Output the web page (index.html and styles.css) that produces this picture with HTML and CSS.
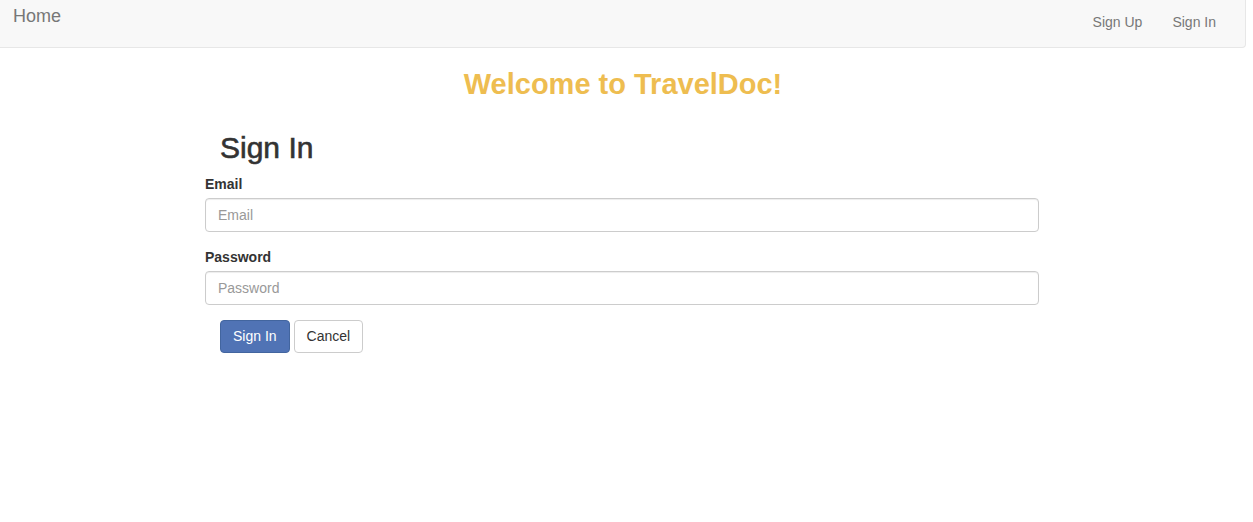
FILE: index.html
```html
<!DOCTYPE html>
<html>
<head>
<meta charset="utf-8">
<link rel="stylesheet" href="styles.css">
</head>
<body>
<nav class="navbar">
  <a class="brand" href="#">Home</a>
  <ul class="nav-links">
    <li><a href="#">Sign Up</a></li>
    <li><a href="#">Sign In</a></li>
  </ul>
</nav>
<main class="main">
  <h1 class="welcome">Welcome to TravelDoc!</h1>
  <div class="form-wrap">
    <h2 class="form-title">Sign In</h2>
    <form class="form">
      <div class="group">
        <label class="label">Email</label>
        <input class="input" type="text" placeholder="Email">
      </div>
      <div class="group">
        <label class="label">Password</label>
        <input class="input" type="password" placeholder="Password">
      </div>
      <div class="actions">
        <button type="button" class="btn btn-primary">Sign In</button>
        <button type="button" class="btn btn-default">Cancel</button>
      </div>
    </form>
  </div>
</main>
</body>
</html>
```
FILE: styles.css
```css
* { box-sizing: border-box; }
html, body { margin: 0; padding: 0; }
body {
  font-family: "Liberation Sans", Arial, Helvetica, sans-serif;
  font-size: 14px;
  line-height: 1.42857;
  color: #333;
  background: #fff;
}
a { text-decoration: none; }

.navbar {
  width: 1246px;
  height: 48px;
  background: #f8f8f8;
  border-bottom: 1px solid #e7e7e7;
  border-right: 1px solid #e7e7e7;
  border-bottom-right-radius: 4px;
  display: flex;
  justify-content: space-between;
  align-items: flex-start;
}
.brand {
  font-size: 18px;
  line-height: 20px;
  color: #777;
  padding: 6px 13px;
}
.nav-links {
  list-style: none;
  margin: 0 14px 0 0;
  padding: 0;
  display: flex;
}
.nav-links a {
  display: block;
  color: #777;
  font-size: 14px;
  line-height: 20px;
  padding: 12px 15px;
}

.main { width: 1246px; }
.welcome {
  margin: 18px 0 0;
  text-align: center;
  color: #eebd50;
  font-size: 29px;
  line-height: 36px;
  font-weight: bold;
}
.form-wrap {
  width: 834px;
  margin-left: 205px;
}
.form-title {
  margin: 28px 0 0 15px;
  font-size: 30px;
  line-height: 36px;
  font-weight: 500;
  color: #333;
  -webkit-text-stroke: 0.6px #333;
}
.form { margin-top: 8px; }
.group + .group { margin-top: 15px; }
.label {
  display: block;
  font-weight: bold;
  font-size: 14px;
  line-height: 20px;
  margin: 0 0 4px;
}
.input {
  display: block;
  width: 100%;
  height: 34px;
  padding: 6px 12px;
  font-family: inherit;
  font-size: 14px;
  color: #555;
  border: 1px solid #ccc;
  border-radius: 4px;
  background: #fff;
  box-shadow: inset 0 1px 1px rgba(0,0,0,0.075);
}
.input::placeholder { color: #999; }
.actions {
  margin-top: 15px;
  padding-left: 15px;
  display: flex;
  gap: 4px;
}
.btn {
  font-family: inherit;
  font-size: 14px;
  line-height: 19px;
  padding: 6px 12px;
  border-radius: 4px;
  border: 1px solid transparent;
  cursor: pointer;
}
.btn-primary {
  background: #5073b5;
  border-color: #42659f;
  color: #fff;
}
.btn-default {
  background: #fff;
  border-color: #ccc;
  color: #333;
}
```
